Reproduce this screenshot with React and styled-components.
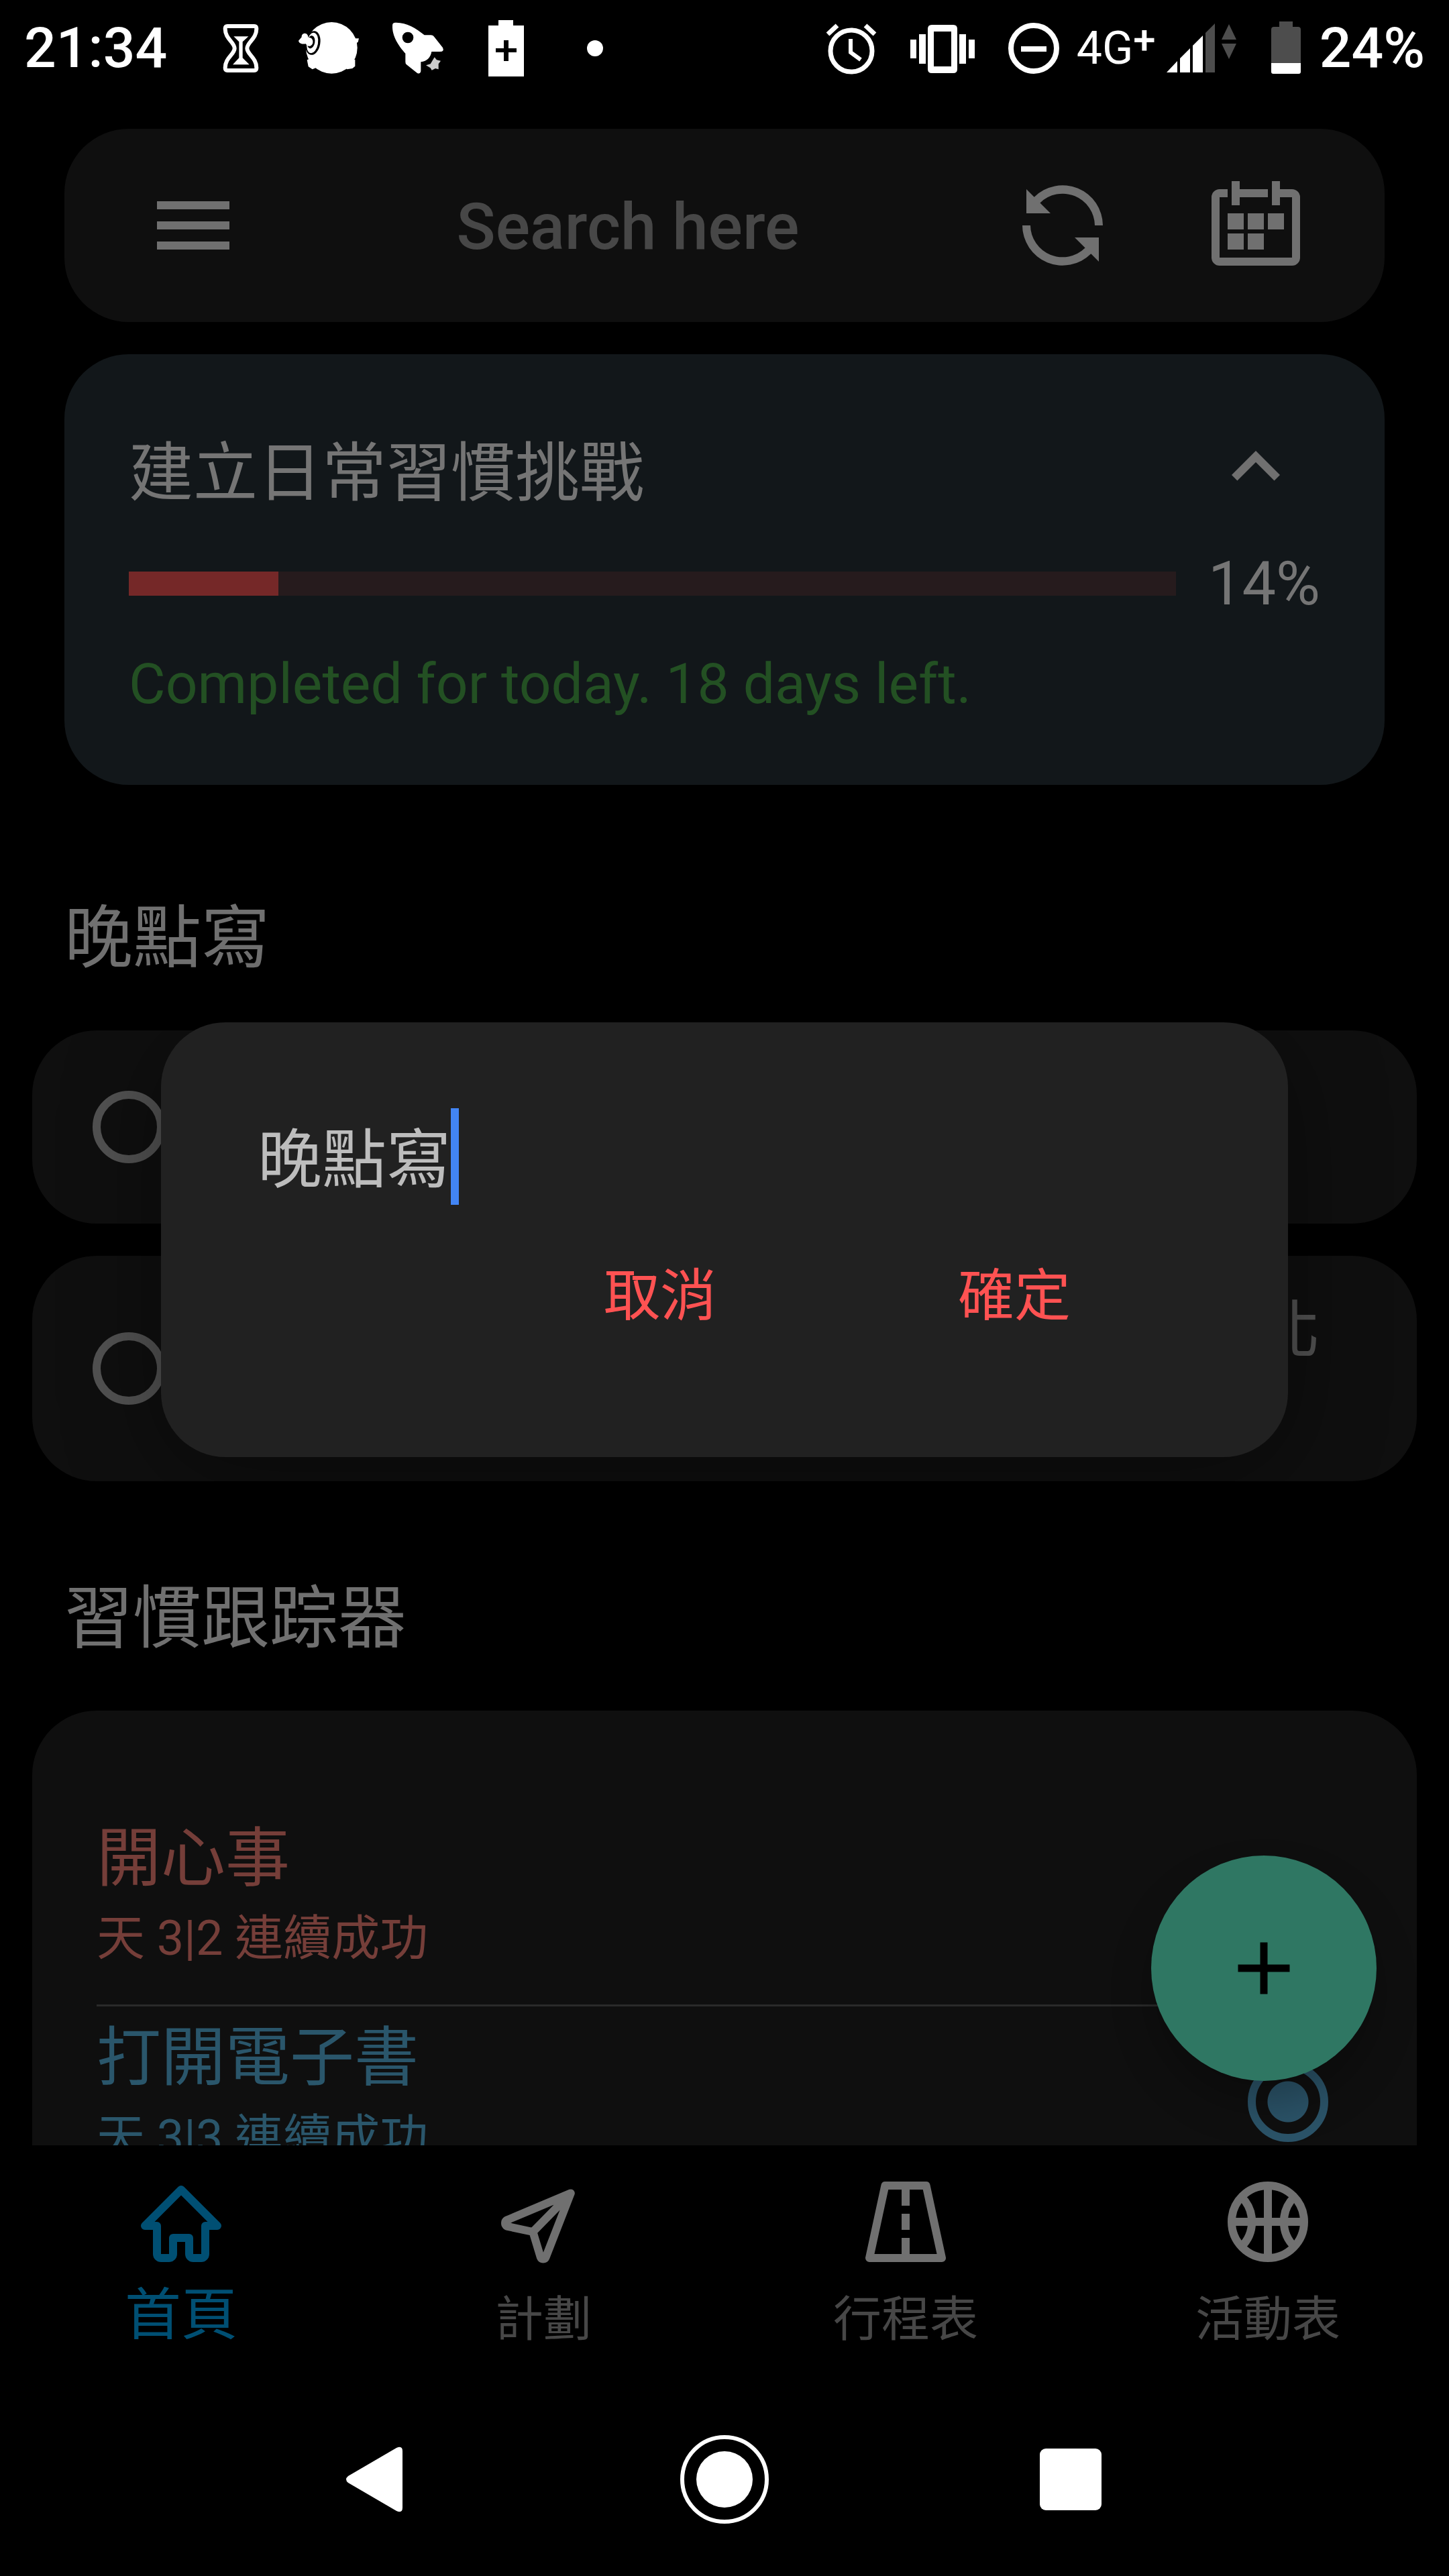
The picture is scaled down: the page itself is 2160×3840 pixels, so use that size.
import { useState } from "react";
import styled, { createGlobalStyle } from "styled-components";

const habits = [
  { id: 1, name: "開心事", streak: "天 3|2 連續成功", color: "#753e39", done: false },
  { id: 2, name: "打開電子書", streak: "天 3|3 連續成功", color: "#2a566b", done: true },
];

const StatusBar = () => (
  <Status>
    <Clock>21:34</Clock>
    <Notifications>
      {/* hourglass */}
      <StatusIcon viewBox="0 12 288 288">
        <path
          d="M84 57h120q10 0 10 12c0 45-42 60-42 87s42 42 42 87q0 12-10 12H84q-10 0-10-12c0-45 42-60 42-87s-42-42-42-87q0-12 10-12z"
          fill="none"
          stroke="#fff"
          strokeWidth="18"
        />
        <path d="M112 103h66l-26 24v72l30 30h-74l28-30v-72z" fill="#fff" />
      </StatusIcon>
      {/* bug */}
      <StatusIcon viewBox="396 12 288 288">
        <circle cx="550" cy="154" r="115" fill="#fff" />
        <path d="M440 208l6 30 18 12 24-10-30-40zM655 206v30l-12 10-24 4-10-10 24-30zM650 112l22 0-4 16-10 6z" fill="#fff" />
        <ellipse cx="466" cy="132" rx="33" ry="54" fill="#000" transform="rotate(10 466 132)" />
        <ellipse cx="464" cy="132" rx="25" ry="46" fill="#fff" transform="rotate(10 464 132)" />
        <ellipse cx="458" cy="128" rx="17" ry="29" fill="#000" transform="rotate(10 458 128)" />
        <path d="M402 122l14-16c-2-18 22-24 28-6l2 8c24-4 28 34 6 38-8 2-14-4-18-10-12 2-30 0-32-14z" fill="#fff" />
      </StatusIcon>
      {/* rocket */}
      <StatusIcon viewBox="792 12 288 288">
        <path
          d="M830 42c50-4 96 24 135 55h30q10 0 14 8l38 48q8 18-12 18h-38c-4 24-20 44-48 46v42q-4 14-16 8l-48-38q-5-4-5-12v-38c-28-30-60-76-58-124q0-12 8-13z"
          fill="#fff"
        />
        <circle cx="891" cy="108" r="25" fill="#000" />
        <path d="M1010 196l10 12 18 4-10 14v24l-14-4-16 8-6-10-20-12 20-6z" fill="#ccc" />
      </StatusIcon>
      {/* battery plus */}
      <StatusIcon viewBox="0 0 96 96">
        <path d="M36 6h22v8h16v76H21V14h15zM44 36v12H32v6h12v13h7V54h12v-6H51V36z" fill="#fff" fillRule="evenodd" />
      </StatusIcon>
      <StatusIcon viewBox="0 0 96 96">
        <circle cx="48" cy="48" r="12" fill="#fff" />
      </StatusIcon>
    </Notifications>
    <System>
      <StatusIcon viewBox="0 0 96 96" stroke="#fff" fill="none">
        <circle cx="48" cy="52" r="31" strokeWidth="7" />
        <path d="M47 34v20l15 11" strokeWidth="6" />
        <path d="M13 27l14-13M83 27L69 14" strokeWidth="7" />
      </StatusIcon>
      <StatusIcon viewBox="0 0 96 96" fill="#fff">
        <path
          d="M32 13h32q6 0 6 6v60q0 6-6 6H32q-6 0-6-6V19q0-6 6-6zM35 23v52h26V23z"
          fillRule="evenodd"
        />
        <path d="M13 27h10v44H13zM73 27h10v44H73zM0 35h9v28H0zM87 35h9v28h-9z" />
      </StatusIcon>
      <StatusIcon viewBox="0 0 96 96" stroke="#fff" fill="none">
        <circle cx="48" cy="48" r="34" strokeWidth="8" />
        <path d="M29 49h38" strokeWidth="8" />
      </StatusIcon>
      <Network>
        4G<Plus>+</Plus>
      </Network>
      <SignalIcon viewBox="0 0 104 96">
        <path d="M0 84L16 67v17zM20 63l15-15v36H20zM39 44l15-15v55H39z" fill="#fff" />
        <path d="M58 25l14-14v73H58zM82 35L93 12l11 23zM82 41h22L93 64z" fill="#4d4d4d" />
      </SignalIcon>
      <BatteryIcon viewBox="0 0 44 96">
        <path d="M12 8h20v8h8q4 0 4 4v50H0V20q0-4 4-4h8z" fill="#4d4d4d" />
        <path d="M0 70h44v13q0 3-3 3H3q-3 0-3-3z" fill="#fff" />
      </BatteryIcon>
      <Clock>24%</Clock>
    </System>
  </Status>
);

const SearchBar = () => (
  <Search>
    <BarButton aria-label="Menu">
      <Icon viewBox="0 0 24 24">
        <path d="M3 18h18v-2H3v2zm0-5h18v-2H3v2zm0-7v2h18V6H3z" />
      </Icon>
    </BarButton>
    <SearchInput type="text" placeholder="Search here" aria-label="Search" />
    <BarButton aria-label="Sync">
      <Icon viewBox="0 0 24 24">
        <path d="M3 3v6h6L6.4 6.4A8 8 0 0 1 20 12h2A10 10 0 0 0 4.95 4.95zM21 21v-6h-6l2.6 2.6A8 8 0 0 1 4 12H2a10 10 0 0 0 17.05 7.05z" />
      </Icon>
    </BarButton>
    <BarButton aria-label="Calendar">
      <Icon viewBox="0 0 24 24">
        <path d="M6 1h2v2h7v2H8v2H6zM16 1h2v2h3a2 2 0 0 1 2 2v15a2 2 0 0 1-2 2H3a2 2 0 0 1-2-2V5a2 2 0 0 1 2-2h2v2H3v15h18V5h-3v2h-2z" />
        <path d="M5 9h4v4H5zM10 9h4v4h-4zM15 9h4v4h-4zM5 14h4v4H5zM10 14h4v4h-4z" />
      </Icon>
    </BarButton>
  </Search>
);

const Challenge = ({ done, total }) => {
  const percent = (done / total) * 100;

  return (
    <ChallengeCard>
      <ChallengeHead>
        <ChallengeTitle>建立日常習慣挑戰</ChallengeTitle>
        <FoldButton aria-label="Collapse">
          <Icon viewBox="0 0 24 24">
            <path d="M7.41 15.41L12 10.83l4.59 4.58L18 14l-6-6-6 6z" />
          </Icon>
        </FoldButton>
      </ChallengeHead>
      <ProgressRow>
        <Track role="progressbar" aria-valuenow={Math.round(percent)}>
          <Fill style={{ width: `${percent}%` }} />
        </Track>
        <Percent>{Math.round(percent)}%</Percent>
      </ProgressRow>
      <ChallengeNote>Completed for today. {total - done} days left.</ChallengeNote>
    </ChallengeCard>
  );
};

const HabitList = () => (
  <HabitCard>
    {habits.map((habit) => (
      <Habit key={habit.id} $color={habit.color}>
        <HabitText>
          <HabitName>{habit.name}</HabitName>
          <HabitStreak>{habit.streak}</HabitStreak>
        </HabitText>
        <HabitCheck type="checkbox" aria-label={habit.name} defaultChecked={habit.done} />
      </Habit>
    ))}
  </HabitCard>
);

const RenameDialog = () => {
  const [name, setName] = useState("晚點寫");

  return (
    <Overlay>
      <Dialog role="dialog" aria-label="晚點寫">
        <Field>
          <NameInput
            type="text"
            aria-label="Name"
            value={name}
            $chars={name.length}
            onChange={(e) => setName(e.target.value)}
          />
          <Caret />
        </Field>
        <Actions>
          <ActionButton>取消</ActionButton>
          <ActionButton>確定</ActionButton>
        </Actions>
      </Dialog>
    </Overlay>
  );
};

const TabBar = () => (
  <Tabs>
    <Tab href="#home" $active>
      <TabIcon viewBox="0 0 24 24">
        <path d="M3 13l9-9 9 9h-3v7a1 1 0 0 1-1 1h-2a1 1 0 0 1-1-1v-4h-4v4a1 1 0 0 1-1 1H7a1 1 0 0 1-1-1v-7z" />
      </TabIcon>
      <TabLabel $active>首頁</TabLabel>
    </Tab>
    <Tab href="#plan">
      <TabIcon viewBox="0 0 24 24">
        <path d="M18.8 4.9L2.9 11.6a.9.9 0 0 0 0 1.5l6.5 1.4 1.9 6.3a.7.7 0 0 0 1.3 0zL9.4 14.5" />
      </TabIcon>
      <TabLabel>計劃</TabLabel>
    </Tab>
    <Tab href="#schedule">
      <TabIcon viewBox="0 0 24 24">
        <path d="M6.9 3h10.2L21 21H3zM12 4v4M12 10v4M12 16v4" />
      </TabIcon>
      <TabLabel>行程表</TabLabel>
    </Tab>
    <Tab href="#activity">
      <TabIcon viewBox="0 0 24 24">
        <circle cx="12" cy="12" r="9" />
        <path d="M12 3v18M3 12h18M5.4 5.8c3.5 3.4 3.5 9 0 12.4M18.6 5.8c-3.5 3.4-3.5 9 0 12.4" />
      </TabIcon>
      <TabLabel>活動表</TabLabel>
    </Tab>
  </Tabs>
);

const App = () => (
  <Screen>
    <GlobalStyle />
    <StatusBar />
    <Body>
      <Main>
        <SearchBar />
        <Challenge done={3} total={21} />
        <SectionTitle>晚點寫</SectionTitle>
        <Tasks>
          <Task>
            <TaskCheck type="checkbox" aria-label="Done" />
          </Task>
          <Task $tall>
            <TaskCheck type="checkbox" aria-label="Done" />
            <TaskText>北</TaskText>
          </Task>
        </Tasks>
        <SectionTitle>習慣跟踪器</SectionTitle>
        <HabitList />
        <AddButton aria-label="Add">
          <AddIcon viewBox="0 0 24 24">
            <path d="M19 13h-6v6h-2v-6H5v-2h6V5h2v6h6v2z" />
          </AddIcon>
        </AddButton>
      </Main>
      <TabBar />
      <RenameDialog />
    </Body>
    <SystemNav>
      <NavButton aria-label="Back">
        <NavIcon viewBox="0 0 144 144">
          <path d="M27 67L99 25q9-4 9 5v84q0 9-9 5L27 77q-6-5 0-10z" />
        </NavIcon>
      </NavButton>
      <NavButton aria-label="Home">
        <NavIcon viewBox="0 0 144 144">
          <circle cx="72" cy="72" r="42" />
          <circle cx="72" cy="72" r="63" fill="none" stroke="#fff" strokeWidth="6" />
        </NavIcon>
      </NavButton>
      <NavButton aria-label="Recent apps">
        <NavIcon viewBox="0 0 144 144">
          <rect x="26" y="26" width="92" height="92" rx="9" />
        </NavIcon>
      </NavButton>
    </SystemNav>
  </Screen>
);

export default App;

const GlobalStyle = createGlobalStyle`
* {
  box-sizing: border-box;
}
body {
  margin: 0;
  background: #000;
  font-family: Roboto, "Noto Sans CJK TC", sans-serif;
}
button, input {
  margin: 0;
  padding: 0;
  border: 0;
  background: none;
  font-family: inherit;
}
input:focus {
  outline: none;
}
`;

const Screen = styled.div`
display: flex;
flex-direction: column;
height: 100vh;
background: #000;
`;

/* status bar */

const Status = styled.header`
display: flex;
align-items: center;
flex: none;
height: 144px;
padding: 0 36px;
color: #fff;
`;

const Clock = styled.span`
font-size: 84px;
font-weight: 500;
line-height: 148px;
`;

const Notifications = styled.div`
display: flex;
gap: 36px;
margin-left: 62px;
`;

const System = styled.div`
display: flex;
align-items: center;
gap: 40px;
margin-left: auto;
`;

const StatusIcon = styled.svg`
display: block;
width: 96px;
height: 96px;
`;

const Network = styled.span`
display: flex;
align-items: center;
margin: 0 -24px;
font-size: 68px;
line-height: 144px;
`;

const Plus = styled.sup`
align-self: flex-start;
font-size: 60px;
font-weight: 500;
line-height: 120px;
`;

const SignalIcon = styled(StatusIcon)`
width: 104px;
`;

const BatteryIcon = styled(StatusIcon)`
width: 44px;
margin: 0 -12px 0 12px;
`;

/* content */

const Body = styled.div`
position: relative;
display: flex;
flex: 1;
flex-direction: column;
min-height: 0;
`;

const Main = styled.main`
position: relative;
flex: 1;
min-height: 0;
padding-top: 48px;
overflow: hidden;
`;

const Icon = styled.svg`
display: block;
width: 144px;
height: 144px;
fill: currentColor;
`;

const Search = styled.div`
display: flex;
align-items: center;
height: 288px;
margin: 0 96px 48px;
padding: 0 48px;
border-radius: 96px;
background: #0f0f0f;
`;

const BarButton = styled.button`
display: flex;
justify-content: center;
flex: none;
width: 288px;
color: #707070;
`;

const SearchInput = styled.input`
flex: 1;
min-width: 0;
height: 144px;
padding-top: 4px;
color: #757575;
font-size: 96px;
font-weight: 500;
text-align: center;

&::placeholder {
  color: #474747;
  opacity: 1;
}
`;

const ChallengeCard = styled.section`
margin: 0 96px 24px;
padding: 96px 96px 78px;
border-radius: 96px;
background: #12171a;
`;

const ChallengeHead = styled.div`
display: flex;
justify-content: space-between;
align-items: flex-start;
height: 168px;
`;

const ChallengeTitle = styled.h2`
margin: 0;
color: #757575;
font-size: 96px;
font-weight: 400;
line-height: 162px;
`;

const FoldButton = styled.button`
margin-right: 24px;
color: #707070;
`;

const ProgressRow = styled.div`
display: flex;
align-items: center;
gap: 48px;
height: 156px;
`;

const Track = styled.div`
flex: 1;
height: 36px;
background: #261b1d;
`;

const Fill = styled.div`
height: 100%;
background: #752828;
`;

const Percent = styled.span`
color: #757575;
font-size: 90px;
`;

const ChallengeNote = styled.p`
margin: 0;
color: #235023;
font-size: 84px;
line-height: 144px;
`;

const SectionTitle = styled.h2`
margin: 0;
padding: 144px 96px 76px;
color: #707070;
font-size: 102px;
font-weight: 400;
line-height: 122px;
`;

const Tasks = styled.div`
display: flex;
flex-direction: column;
gap: 48px;
margin: 0 48px;
`;

const Task = styled.div`
display: flex;
justify-content: space-between;
align-items: center;
height: ${({ $tall }) => ($tall ? 336 : 288)}px;
padding: 48px 144px 48px 90px;
border-radius: 96px;
background: #0f0f0f;
`;

const TaskCheck = styled.input`
width: 108px;
height: 108px;
border: 12px solid #525252;
border-radius: 50%;
appearance: none;
`;

const TaskText = styled.span`
align-self: flex-start;
color: #525252;
font-size: 96px;
line-height: 126px;
`;

const HabitCard = styled.section`
margin: 0 48px;
padding: 144px 96px 96px;
border-radius: 96px;
background: #0f0f0f;
`;

const Habit = styled.div`
display: flex;
justify-content: space-between;
align-items: center;
padding: 4px 36px 50px 0;
border-bottom: 3px solid #2a2a2a;
color: ${({ $color }) => $color};
`;

const HabitText = styled.div`
display: flex;
flex-direction: column;
`;

const HabitName = styled.span`
font-size: 96px;
line-height: 144px;
`;

const HabitStreak = styled.span`
font-size: 72px;
line-height: 96px;
`;

const HabitCheck = styled.input`
width: 120px;
height: 120px;
margin-top: 36px;
border: 12px solid #2b5368;
border-radius: 50%;
appearance: none;

&:checked {
  background: radial-gradient(circle, #2b5368 30px, transparent 31px);
}
`;

const AddButton = styled.button`
position: absolute;
right: 108px;
bottom: 96px;
display: flex;
align-items: center;
justify-content: center;
width: 336px;
height: 336px;
border-radius: 50%;
background: #2f7763;
box-shadow: 0 36px 60px rgba(0, 0, 0, 0.25);
`;

const AddIcon = styled.svg`
width: 132px;
height: 132px;
fill: #000;
`;

/* bottom tabs */

const Tabs = styled.nav`
display: flex;
flex: none;
padding: 42px 0 20px;
`;

const Tab = styled.a`
display: flex;
flex: 1;
flex-direction: column;
align-items: center;
color: ${({ $active }) => ($active ? "#004f73" : "#707070")};
text-decoration: none;
`;

const TabIcon = styled.svg`
display: block;
width: 144px;
height: 144px;
fill: none;
stroke: currentColor;
stroke-width: 2;
stroke-linejoin: round;
`;

const TabLabel = styled.span`
color: ${({ $active }) => ($active ? "#004f73" : "#474747")};
font-size: ${({ $active }) => ($active ? 84 : 72)}px;
line-height: ${({ $active }) => ($active ? 136 : 148)}px;
`;

/* dialog */

const Overlay = styled.div`
position: absolute;
inset: 0;
display: flex;
align-items: center;
justify-content: center;
padding: 0 240px;
`;

const Dialog = styled.div`
flex: 1;
padding: 128px 144px 160px;
border-radius: 96px;
background: #212121;
box-shadow: 0 24px 144px rgba(0, 0, 0, 0.4);
`;

const Field = styled.div`
display: flex;
height: 144px;
`;

const NameInput = styled.input`
width: ${({ $chars }) => $chars}em;
padding-bottom: 8px;
color: #bdbdbd;
font-size: 96px;
`;

const Caret = styled.span`
width: 12px;
background: #4285f4;
`;

const Actions = styled.div`
display: flex;
justify-content: flex-end;
margin-top: 40px;
`;

const ActionButton = styled.button`
width: 528px;
height: 176px;
color: #ff5252;
font-size: 84px;
`;

/* system navigation */

const SystemNav = styled.nav`
display: flex;
align-items: center;
justify-content: center;
flex: none;
height: 288px;
`;

const NavButton = styled.button`
display: flex;
justify-content: center;
width: 516px;
`;

const NavIcon = styled.svg`
display: block;
width: 144px;
height: 144px;
fill: #fff;
`;
